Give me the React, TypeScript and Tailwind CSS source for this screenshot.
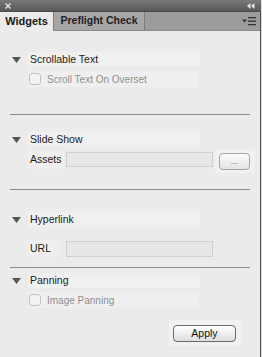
import React from "react";

const font = { fontFamily: '"Liberation Sans", Arial, sans-serif' };

function Tri() {
  return (
    <svg width="9" height="6" viewBox="0 0 9 6" className="shrink-0">
      <polygon points="0,0 9,0 4.5,6" fill="#555555" />
    </svg>
  );
}

function Header({ label }: { label: string }) {
  return (
    <div className="flex items-center">
      <div className="ml-[12px]"><Tri /></div>
      <div className="ml-[7px] w-[172px] h-[15px] bg-[#f0f0f0] pl-[2px] flex items-center text-[10.5px] text-[#1c1c1c]">
        {label}
      </div>
    </div>
  );
}

function Check({ label }: { label: string }) {
  return (
    <div className="ml-[28px] w-[170px] h-[16px] bg-[#efefef] flex items-center">
      <div className="ml-[1px] w-[12px] h-[12px] rounded-[3px] border border-[#c2c2c2] bg-[#f3f3f3]" />
      <span className="ml-[6px] text-[10px] text-[#8f8f8f]">{label}</span>
    </div>
  );
}

function Sep({ mt }: { mt: string }) {
  return <div className={`${mt} ml-[10px] w-[240px] h-px bg-[#8c8c8c]`} />;
}

export default function App() {
  return (
    <div style={font} className="w-[262px] h-[357px] flex flex-col bg-[#dedede] overflow-hidden">
      {/* title bar */}
      <div className="h-[11px] w-[261px] bg-[linear-gradient(#7a7a7a,#585858)] flex items-center justify-between px-[4px]">
        <svg width="6" height="6" viewBox="0 0 6 6" className="ml-[1px]">
          <path d="M0.5 0.5 L5.5 5.5 M5.5 0.5 L0.5 5.5" stroke="#e6e6e6" strokeWidth="1.4" />
        </svg>
        <svg width="8" height="6" viewBox="0 0 8 6" className="mr-[2px]">
          <polygon points="3.5,0 3.5,6 0,3" fill="#e6e6e6" />
          <polygon points="7.5,0 7.5,6 4,3" fill="#e6e6e6" />
        </svg>
      </div>
      <div className="flex-1 w-[261px] flex flex-col border-r border-[#4e4e4e]">
        {/* tab row */}
        <div className="h-[20px] flex bg-[#9c9c9c] border-t border-[#4a4a4a]">
          <div className="w-[53px] bg-[#ebebeb] flex items-center justify-center text-[11px] font-bold text-[#1a1a1a]">
            Widgets
          </div>
          <div className="w-[92px] bg-[#a6a6a6] border-l border-r border-[#7e7e7e] border-b border-b-[#8a8a8a] flex items-center justify-center text-[10.5px] font-bold text-[#222]">
            Preflight Check
          </div>
          <div className="flex-1 border-b border-[#8a8a8a] flex items-center justify-end pr-[4px]">
            <svg width="14" height="9" viewBox="0 0 14 9">
              <polygon points="0,2.5 5,2.5 2.5,5.5" fill="#333" />
              <rect x="6" y="0" width="8" height="1.3" fill="#333" />
              <rect x="6" y="3.5" width="8" height="1.3" fill="#333" />
              <rect x="6" y="7" width="8" height="1.3" fill="#333" />
            </svg>
          </div>
        </div>
        {/* content */}
        <div className="flex-1 bg-[#ebebeb] flex flex-col">
          <div className="mt-[21px]"><Header label="Scrollable Text" /></div>
          <div className="mt-[4px]"><Check label="Scroll Text On Overset" /></div>
          <Sep mt="mt-[27px]" />

          <div className="mt-[17px]"><Header label="Slide Show" /></div>
          <div className="mt-[2px] h-[24px] flex items-start">
            <div className="ml-[28px] mt-[2px] w-[36px] h-[18px] bg-[#efefef] flex items-center pl-[2px] text-[10.5px] text-[#1c1c1c]">
              Assets
            </div>
            <div className="ml-[2px] mt-[3px] w-[147px] h-[15px] bg-[#e7e7e7] border border-[#d0d0d0]" />
            <div className="ml-[2px] w-[40px] h-[24px] bg-[#f1f1f1] flex items-start">
              <div className="ml-[4px] mt-[4px] w-[31px] h-[17px] rounded-[4px] border border-[#a5a5a5] bg-[linear-gradient(#fbfbfb,#e4e4e4)] flex items-center justify-center text-[9px] text-[#777] leading-none">
                ...
              </div>
            </div>
          </div>
          <Sep mt="mt-[16px]" />

          <div className="mt-[22px]"><Header label="Hyperlink" /></div>
          <div className="mt-[13px] h-[17px] flex items-center">
            <div className="ml-[28px] w-[32px] h-[17px] bg-[#efefef] flex items-center pl-[2px] text-[10.5px] text-[#1c1c1c]">
              URL
            </div>
            <div className="ml-[6px] w-[147px] h-[16px] bg-[#e7e7e7] border border-[#d0d0d0]" />
          </div>
          <Sep mt="mt-[10px]" />

          <div className="mt-[5px]"><Header label="Panning" /></div>
          <div className="mt-[4px]"><Check label="Image Panning" /></div>
          <div className="mt-[12px] ml-[169px] w-[72px] h-[26px] bg-[#f1f1f1] flex items-start">
            <div className="ml-[4px] mt-[5px] w-[63px] h-[17px] rounded-[4px] border border-[#6a6a6a] bg-[linear-gradient(#ffffff,#dedede)] flex items-center justify-center text-[10.5px] text-[#111]">
              Apply
            </div>
          </div>
        </div>
      </div>
    </div>
  );
}
